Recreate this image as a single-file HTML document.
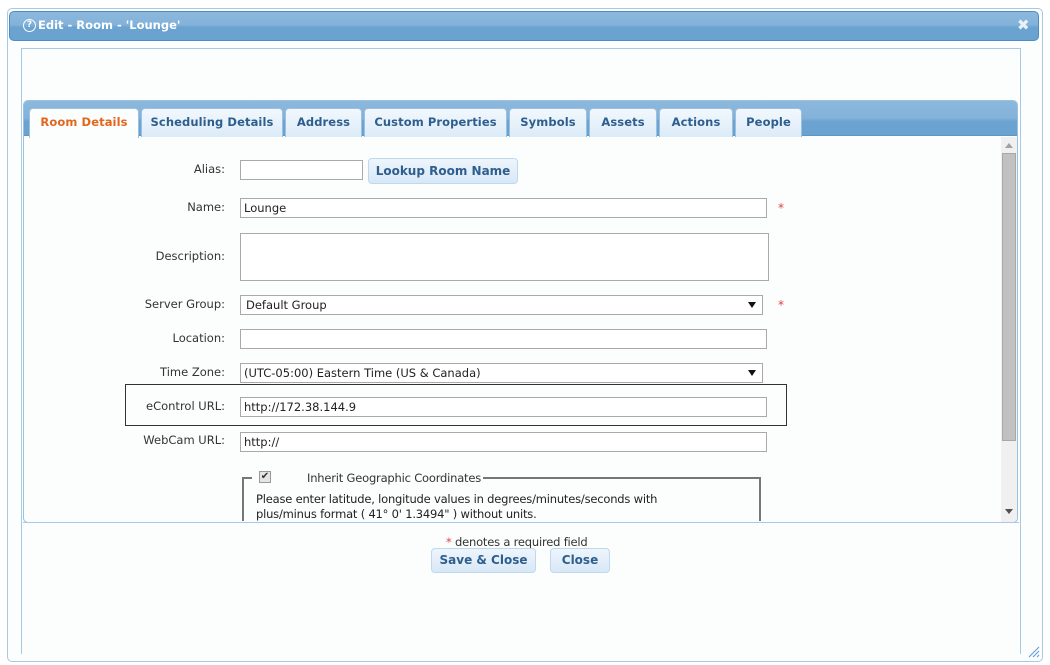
<!DOCTYPE html>
<html><head><style>
*{box-sizing:border-box;margin:0;padding:0}
body{width:1050px;height:665px;background:#fff;font-family:"DejaVu Sans","Liberation Sans",sans-serif;font-size:12px;color:#222;position:relative;overflow:hidden}
.a{position:absolute}
#dlg{left:7px;top:8px;width:1036px;height:654px;border:1px solid #a8c8e4;border-radius:5px;background:#fcfdfd}
#title{left:9px;top:11px;width:1030px;height:30px;border:1px solid #4d8cc4;border-radius:5px;background:linear-gradient(#8cb8dc 0%,#83b2da 45%,#6aa3d0 55%,#6aa3d0 100%);color:#fff;font-weight:bold;font-size:11.5px;line-height:26px;padding-left:28px}
#panel{left:21px;top:48px;width:1000px;height:606px;border:1px solid #a8c8e4;border-bottom:none;background:#fcfdfd}
#tabs{left:23px;top:100px;width:995px;height:423px;border:1px solid #9cc0e0;border-radius:5px;background:#fcfdfd;overflow:hidden}
#tabbar{left:0;top:0;width:993px;height:35px;background:linear-gradient(#8cb8dc 0%,#83b2da 50%,#6aa3d0 60%,#6aa3d0);border-bottom:1px solid #5a96ca}
.tab{position:absolute;top:7px;height:29px;background:linear-gradient(#f2f8fd,#dcebf8);border:1px solid #9cc0e0;border-bottom:none;border-radius:4px 4px 0 0;color:#2e5e8e;font-weight:bold;font-size:11.5px;text-align:center;line-height:27px;letter-spacing:0.1px}
.tab.sel{background:#fcfdfd;color:#e2661e;height:30px}
.lbl{position:absolute;width:200px;text-align:right;font-size:11.5px;color:#333}
.inp{position:absolute;height:20px;border:1px solid #a9a9a9;background:#fff;font-size:11.5px;padding-left:3px;line-height:18px}
.star{position:absolute;color:#e04040;font-size:12px}
.btn{position:absolute;border:1px solid #c0d8ee;border-radius:4px;background:linear-gradient(#eef5fc,#d8e8f7);color:#2e5e8e;font-weight:bold;font-size:12px;text-align:center}
.arr{position:absolute;right:6px;top:6px;width:0;height:0;border-left:4px solid transparent;border-right:4px solid transparent;border-top:6px solid #111}
</style></head><body>
<div id="dlg" class="a"></div>
<div id="title" class="a">Edit - Room - 'Lounge'</div>
<div class="a" style="left:23px;top:19px;width:13px;height:13px;border:1.5px solid #fff;border-radius:50%;color:#fff;font-size:9px;font-weight:bold;text-align:center;line-height:11px">?</div>
<div class="a" style="left:1017px;top:16px;color:#e8f0f8;font-size:15px;font-weight:bold">✖</div>
<div id="panel" class="a"></div>
<div id="tabs" class="a">
 <div id="tabbar" class="a"></div>
 <div class="tab sel" style="left:5px;width:110px">Room Details</div>
 <div class="tab" style="left:117px;width:142px">Scheduling Details</div>
 <div class="tab" style="left:261px;width:77px">Address</div>
 <div class="tab" style="left:340px;width:143px">Custom Properties</div>
 <div class="tab" style="left:485px;width:78px">Symbols</div>
 <div class="tab" style="left:565px;width:68px">Assets</div>
 <div class="tab" style="left:635px;width:74px">Actions</div>
 <div class="tab" style="left:711px;width:67px">People</div>
 <div class="a" style="left:977px;top:36px;width:17px;height:385px;background:#f0f0f0"></div>
 <div class="a" style="left:978px;top:52px;width:14px;height:288px;background:#c1c1c1;border:1px solid #a8a8a8"></div>
 <div class="a" style="left:981px;top:42px;border-left:4px solid transparent;border-right:4px solid transparent;border-bottom:5px solid #a0a0a0"></div>
 <div class="a" style="left:981px;top:408px;border-left:4px solid transparent;border-right:4px solid transparent;border-top:5px solid #505050"></div>
</div>
<div class="lbl" style="left:25px;top:162px">Alias:</div>
<div class="inp" style="left:240px;top:160px;width:123px"></div>
<div class="btn" style="left:368px;top:158px;width:150px;height:26px;line-height:24px">Lookup Room Name</div>
<div class="lbl" style="left:25px;top:200px">Name:</div>
<div class="inp" style="left:240px;top:198px;width:527px">Lounge</div>
<div class="star" style="left:778px;top:201px">*</div>
<div class="lbl" style="left:25px;top:249px">Description:</div>
<div class="inp" style="left:240px;top:233px;width:529px;height:48px"></div>
<div class="lbl" style="left:25px;top:297px">Server Group:</div>
<div class="inp" style="left:240px;top:295px;width:523px;padding-left:5px">Default Group<div class="arr"></div></div>
<div class="star" style="left:778px;top:298px">*</div>
<div class="lbl" style="left:25px;top:331px">Location:</div>
<div class="inp" style="left:240px;top:329px;width:527px"></div>
<div class="lbl" style="left:25px;top:365px">Time Zone:</div>
<div class="inp" style="left:240px;top:363px;width:523px">(UTC-05:00) Eastern Time (US &amp; Canada)<div class="arr"></div></div>
<div class="a" style="left:125px;top:384px;width:662px;height:42px;border:1px solid #333"></div>
<div class="lbl" style="left:25px;top:399px">eControl URL:</div>
<div class="inp" style="left:240px;top:397px;width:527px">http://172.38.144.9</div>
<div class="lbl" style="left:25px;top:433px">WebCam URL:</div>
<div class="inp" style="left:240px;top:432px;width:527px">http://</div>
<div class="a" style="left:242px;top:477px;width:519px;height:44px;border:2px solid #777;border-bottom:none"></div>
<div class="a" style="left:252px;top:468px;width:214px;height:20px;background:#fcfdfd"></div>
<div class="a" style="left:259px;top:471px;width:12px;height:12px;border:1px solid #999;background:#e4e4e4;font-size:10px;line-height:10px;text-align:center;color:#333">✔</div>
<div class="a" style="left:307px;top:471px;font-size:11.5px;color:#333;white-space:nowrap;letter-spacing:-0.2px;background:#fcfdfd;padding-right:2px">Inherit Geographic Coordinates</div>
<div class="a" style="left:256px;top:492px;font-size:11.5px;color:#222;line-height:15px;width:480px;letter-spacing:-0.2px">Please enter latitude, longitude values in degrees/minutes/seconds with<br>plus/minus format ( 41° 0' 1.3494" ) without units.</div>
<div class="a" style="left:23px;top:522px;width:996px;height:1px;background:#a8c8e4"></div>
<div class="a" style="left:446px;top:535px;font-size:11.5px;color:#333;letter-spacing:-0.2px"><span style="color:#e04040">*</span> denotes a required field</div>
<div class="btn" style="left:431px;top:548px;width:105px;height:25px;line-height:22px">Save &amp; Close</div>
<div class="btn" style="left:550px;top:548px;width:60px;height:25px;line-height:22px">Close</div>
<svg class="a" style="left:1026px;top:644px" width="14" height="14"><path d="M13 3L3 13M13 7L7 13M13 11L11 13" stroke="#5a9ad8" stroke-width="1"/></svg>
</body></html>
